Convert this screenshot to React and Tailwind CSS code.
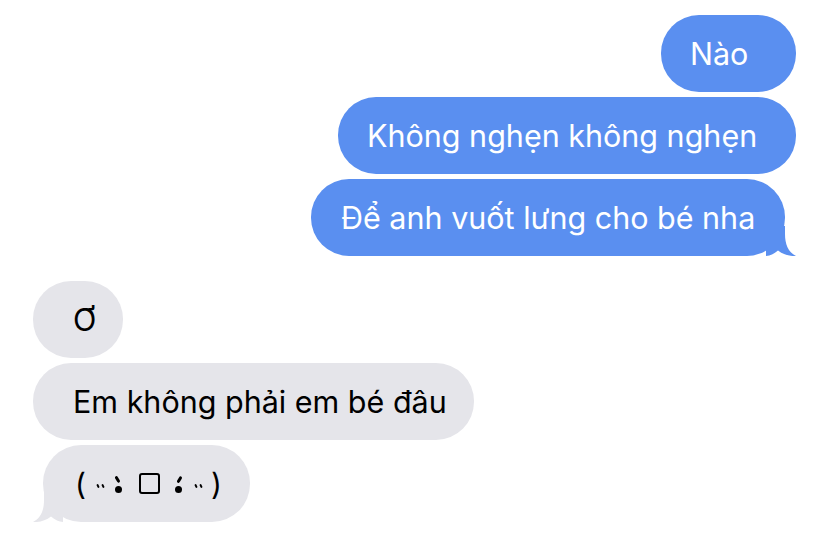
import React from "react";

const Tail = ({ side, color }) => (
  <svg
    width="30"
    height="30"
    viewBox="0 0 30 30"
    className={side === "right" ? "absolute bottom-0 right-[-11px]" : "absolute bottom-0 left-[-10px] -scale-x-100"}
  >
    <path d="M0 0 H19 V8 C19 18 22 26 30 30 C24 30.5 17 28.5 12 24.5 C8 27.5 4 30 0 30 Z" fill={color} />
  </svg>
);

const Bubble = ({ children, width, pl, side, tail }) => {
  const mine = side === "right";
  const color = mine ? "#5a8ff0" : "#e5e5ea";
  return (
    <div
      className={`relative flex h-[77px] shrink-0 items-center whitespace-nowrap rounded-[38px] text-[30.5px] ${
        mine ? "bg-[#5a8ff0] text-white" : "bg-[#e5e5ea] text-black"
      }`}
      style={{ width, paddingLeft: pl }}
    >
      {tail && <Tail side={side} color={color} />}
      <span className="relative">{children}</span>
    </div>
  );
};

// two small slanted ticks, like ˵
const Blush = () => (
  <span className="mt-[5px] flex gap-[3px]">
    <span className="h-[4px] w-[2px] -rotate-[25deg] rounded-full bg-black" />
    <span className="h-[4px] w-[2px] -rotate-[25deg] rounded-full bg-black" />
  </span>
);

const Eye = ({ right }) => (
  <span className="flex flex-col items-center gap-[3px]">
    <span
      className={`h-[7px] w-[2.5px] rounded-full bg-black ${right ? "ml-[2px] rotate-[30deg]" : "-ml-[2px] -rotate-[30deg]"}`}
    />
    <span className="h-[7px] w-[7px] rounded-full bg-black" />
  </span>
);

// kaomoji ( ˵ •̀ □ •́ ˵ )
const Kaomoji = () => (
  <span className="flex h-[34px] items-center text-black">
    <span className="text-[30px] leading-none">(</span>
    <span className="ml-[11px]"><Blush /></span>
    <span className="ml-[11px] mt-[2px]"><Eye /></span>
    <span className="ml-[17px] h-[21px] w-[21px] rounded-[3px] border-[2.5px] border-black" />
    <span className="ml-[15px] mt-[2px]"><Eye right /></span>
    <span className="ml-[13px]"><Blush /></span>
    <span className="ml-[9px] text-[30px] leading-none">)</span>
  </span>
);

const App = () => {
  return (
    <div
      className="flex h-[543px] w-[828px] flex-col overflow-hidden bg-white pt-[15px]"
      style={{ fontFamily: "Inter, 'Noto Sans', 'DejaVu Sans', sans-serif" }}
    >
      <div className="flex flex-col items-end gap-[5px] pr-[32px]">
        <Bubble side="right" width={135} pl={29}>Nào</Bubble>
        <Bubble side="right" width={458} pl={29}>Không nghẹn không nghẹn</Bubble>
        <div className="mr-[11px]">
          <Bubble side="right" width={474} pl={30} tail>Để anh vuốt lưng cho bé nha</Bubble>
        </div>
      </div>

      <div className="mt-[25px] flex flex-col items-start gap-[5px] pl-[33px]">
        <Bubble side="left" width={90} pl={40}>Ơ</Bubble>
        <Bubble side="left" width={441} pl={40}>Em không phải em bé đâu</Bubble>
        <div className="ml-[10px]">
          <Bubble side="left" width={207} pl={32} tail>
            <Kaomoji />
          </Bubble>
        </div>
      </div>
    </div>
  );
};

export default App;
